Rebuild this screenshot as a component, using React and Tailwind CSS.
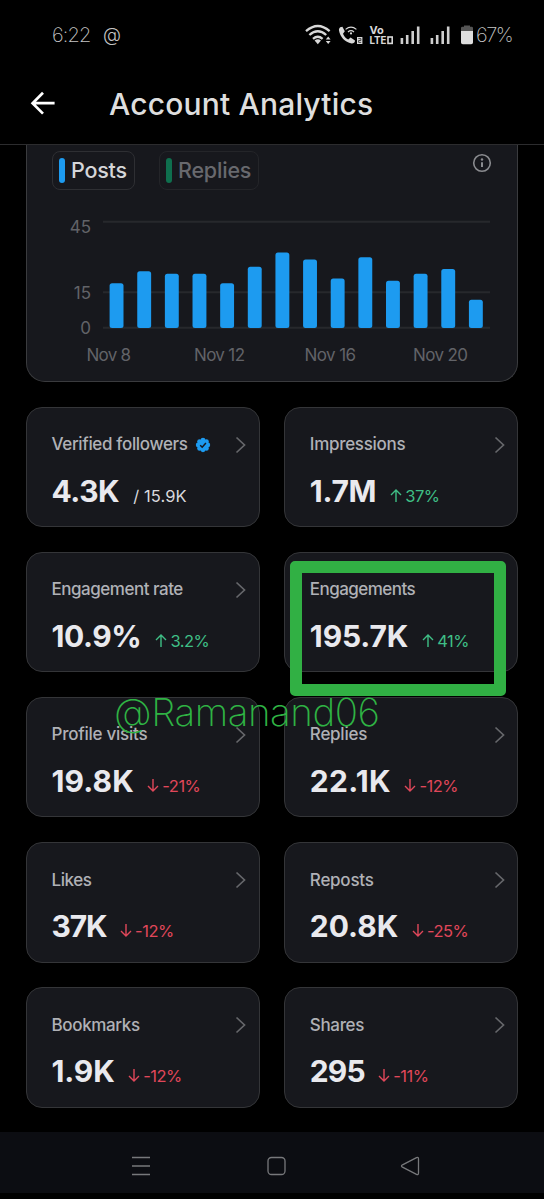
import React from "react";

const cards = [
  { label: "Verified followers", value: "4.3K", total: "/ 15.9K", verified: true, lt: "tracking-[-0.350px]", vt: "tracking-[-0.450px]" },
  { label: "Impressions", value: "1.7M", delta: "37%", up: true, lt: "tracking-[-0.300px]", vt: "tracking-[-0.300px]" },
  { label: "Engagement rate", value: "10.9%", delta: "3.2%", up: true, lt: "tracking-[-0.480px]", vt: "tracking-[-0.400px]" },
  { label: "Engagements", value: "195.7K", delta: "41%", up: true, lt: "tracking-[-0.550px]", vt: "tracking-[-0.150px]" },
  { label: "Profile visits", value: "19.8K", delta: "-21%", lt: "tracking-[-0.250px]", vt: "tracking-[0.100px]" },
  { label: "Replies", value: "22.1K", delta: "-12%", lt: "tracking-[-0.250px]", vt: "tracking-[0.300px]" },
  { label: "Likes", value: "37K", delta: "-12%", lt: "tracking-[-0.450px]", vt: "tracking-[-1.100px]" },
  { label: "Reposts", value: "20.8K", delta: "-25%", lt: "tracking-[-0.250px]", vt: "tracking-[0px]" },
  { label: "Bookmarks", value: "1.9K", delta: "-12%", lt: "tracking-[-0.350px]", vt: "tracking-[-0.100px]" },
  { label: "Shares", value: "295", delta: "-11%", lt: "tracking-[-0.350px]", vt: "tracking-[-0.900px]" },
];

const posts = [19, 24, 23, 23, 19, 26, 32, 29, 21, 30, 20, 23, 25, 12];

function StatusBar() {
  return (
    <div className="flex h-[72px] items-center pl-[52px] pr-[32px] pb-[2px] text-[#c4c4c4]">
      <span className="w-[51px] font-['Inter'] text-[20px] font-extralight tracking-[-0.850px]">6:22</span>
      <span className="pb-px font-['Inter'] text-[18.500px] font-light leading-none">@</span>
      <svg className="ml-auto" width="162" height="30" viewBox="0 0 162 30" fill="none">
        <g stroke="#d8d8d8" strokeWidth="2.3">
          <path d="M1 11.2Q12.8 0.8 24.6 11.2" />
          <path d="M4.4 15Q12.8 7.4 21.2 15" />
          <path d="M8 18.8Q12.8 14.6 17.6 18.8" />
        </g>
        <path d="M9.6 20.6Q12.8 18 16 20.6L12.8 24.2Z" fill="#d8d8d8" />
        <path d="M20.8 19.4L23.2 16.4L25.6 19.4ZM20.8 21L23.2 24L25.6 21Z" fill="#d8d8d8" />
        <path d="M35.2 7.2C34.2 8 33.8 9 34 10.4C35 16.8 40 22.2 46.6 23.4C48 23.6 49.2 23 49.8 21.8L50 20.4L45.6 17.6L43.2 19.6C40.8 18.4 39 16.4 38 13.8L39.8 11.2L37.4 6.8Z" fill="#d8d8d8" />
        <g stroke="#d8d8d8" strokeWidth="1.2">
          <path d="M40.6 9.4Q46 4.8 51.4 9.4" />
          <path d="M43 12Q46 9.4 49 12" />
        </g>
        <circle cx="46" cy="13.4" r="1.1" fill="#d8d8d8" />
        <rect x="52" y="17" width="5.4" height="7" fill="#d8d8d8" />
        <path d="M53.3 18.6H55.9V20.5H53.6V22.4H56.2" stroke="#222" strokeWidth=".8" />
        <text x="64.5" y="14" className="font-['Inter'] text-[11px] font-bold" fill="#d8d8d8">Vo</text>
        <text x="64.5" y="24" textLength="17" lengthAdjust="spacingAndGlyphs" className="font-['Inter'] text-[11px] font-bold" fill="#d8d8d8">LTE</text>
        <rect x="83" y="17" width="4.2" height="6.4" stroke="#d8d8d8" strokeWidth="1.6" />
        <path d="M96.900 24V18M102.200 24V15M107.700 24V11M113.200 24V6.600M126.900 24V18M132.200 24V15M137.700 24V11M143.200 24V6.600" stroke="#cfcfcf" strokeWidth="2.6" />
      </svg>
      <svg className="-ml-[7px]" width="14" height="30" viewBox="0 0 14 30">
        <path d="M4 5.5h6v1.2h1.6q1.4 0 1.4 1.4V11H1V8.100q0-1.400 1.400-1.400H4z" fill="#555" />
        <path d="M1 11H13V22.4q0 1.800-1.800 1.800H2.800Q1 24.200 1 22.400Z" fill="#dedede" />
      </svg>
      <span className="ml-[2px] w-[36px] font-['Inter'] text-[20px] font-extralight tracking-[-1.500px]">67%</span>
    </div>
  );
}

function Header() {
  return (
    <div className="flex h-[73px] items-center border-b border-[#2c2c2e] pl-[30px] pb-[9px]">
      <svg width="25" height="25" viewBox="0 0 25 25" fill="none" stroke="#fff" strokeWidth="2.7">
        <path d="M13 1.800L2.600 12.200L13 22.600M2.600 12.200H24.600" />
      </svg>
      <h1 className="ml-[54px] pt-px font-['Inter'] text-[30px] font-medium leading-none tracking-[0.180px] text-[#dedede]">Account Analytics</h1>
    </div>
  );
}

function ChartCard() {
  return (
    <section className="mx-[26px] h-[237px] rounded-b-[19px] border border-t-0 border-[#3a3b3e] bg-[#17181d] font-['Inter']">
      <div className="flex h-[45px] items-end pl-[25px] pr-[25px]">
        <div className="flex h-[39px] w-[83px] items-center rounded-[8px] border border-[#2e2f33] pl-[6px]">
          <i className="h-[25px] w-[6px] rounded-[3px] bg-[#1d9bf0]" />
          <span className="ml-[6px] text-[21.500px] font-medium leading-none tracking-[-0.200px] text-[#d5d6d9]">Posts</span>
        </div>
        <div className="ml-[24px] flex h-[39px] w-[100px] items-center rounded-[8px] border border-[#242529] pl-[6px]">
          <i className="h-[25px] w-[6px] rounded-[3px] bg-[#0f6f4e]" />
          <span className="ml-[6px] text-[21.500px] font-medium leading-none tracking-[-0.200px] text-[#68696e]">Replies</span>
        </div>
        <svg className="mb-[17px] ml-auto" width="20" height="20" viewBox="0 0 20 20" fill="none" stroke="#8a8b8f">
          <circle cx="10" cy="10" r="8.300" strokeWidth="1.600" />
          <path d="M10 9.200V14" strokeWidth="2" />
          <circle cx="10" cy="6.500" r="1.200" fill="#8a8b8f" stroke="none" />
        </svg>
      </div>
      <svg width="490" height="190" viewBox="27 190 490 190" className="block font-['Inter'] text-[17px]">
        <path d="M103 221.700H490M103 292.300H490M103 327.700H490" stroke="#27282c" strokeWidth="2" />
        {posts.map((v, i) => (
          <rect key={i} x={109.600 + i * 27.640} y={328 - v * 2.360} width="13.900" height={v * 2.360} rx="2.500" fill="#1d9bf0" />
        ))}
        <g fill="#626368">
          <g textAnchor="end">
            <text x="91" y="233">45</text>
            <text x="91" y="299">15</text>
            <text x="91" y="334">0</text>
          </g>
          <text x="86.500" y="361" textLength="44.500">Nov 8</text>
          <text x="194" y="361" textLength="51">Nov 12</text>
          <text x="304.500" y="361" textLength="51.500">Nov 16</text>
          <text x="413" y="361" textLength="55">Nov 20</text>
        </g>
      </svg>
    </section>
  );
}

function Verified() {
  return (
    <svg className="ml-[7px]" width="16" height="16" viewBox="0 0 16 16">
      <g fill="#1d9bf0">
        <circle cx="8" cy="8" r="5.800" />
        <circle cx="8" cy="3.200" r="2.400" />
        <circle cx="11.400" cy="4.600" r="2.400" />
        <circle cx="12.800" cy="8" r="2.400" />
        <circle cx="11.400" cy="11.400" r="2.400" />
        <circle cx="8" cy="12.800" r="2.400" />
        <circle cx="4.600" cy="11.400" r="2.400" />
        <circle cx="3.200" cy="8" r="2.400" />
        <circle cx="4.600" cy="4.600" r="2.400" />
      </g>
      <path d="M5.200 8.200L7.200 10.200L10.900 6" fill="none" stroke="#17181d" strokeWidth="1.500" />
    </svg>
  );
}

function Card({ label, value, total, verified, delta, up, lt, vt }) {
  return (
    <div className="h-[120.500px] rounded-[16px] border-[1.500px] border-[#343538] bg-[#17181d] pl-[24.500px] pr-[12.500px] font-['Inter']">
      <div className="flex h-[26px] items-center mt-[24px]">
        <span className={`${lt} text-[17px] font-medium leading-none text-[#b0b1b6]`}>{label}</span>
        {verified && <Verified />}
        <svg className="ml-auto" width="11" height="18" viewBox="0 0 11 18" fill="none" stroke="#66676b" strokeWidth="1.700">
          <path d="M1.500 1.500L9.500 9L1.500 16.500" />
        </svg>
      </div>
      <div className="mt-[18px] flex items-baseline leading-none">
        <span className={`${vt} text-[30px] font-bold text-[#e9e9ee]`}>{value}</span>
        {total && <span className="ml-[14px] text-[16.500px] tracking-[0.100px] text-[#d9d9de]">{total}</span>}
        {delta && (
          <span className={up ? "ml-[14px] flex items-baseline text-[#3fbf86]" : "ml-[13.500px] flex items-baseline text-[#e0475a]"}>
            <svg width="12" height="13" viewBox="0 0 12 13" fill="none" stroke="currentColor" strokeWidth="1.400">
              <path d={up ? "M6 13V1M1 6L6 1L11 6" : "M6 0V12M1 7L6 12L11 7"} />
            </svg>
            <span className="ml-[3px] text-[16.500px] tracking-[-0.500px]">{delta}</span>
          </span>
        )}
      </div>
    </div>
  );
}

function NavBar() {
  return (
    <nav className="mt-auto mb-[6px] flex h-[61px] items-center bg-[#0c0d12] pl-[131px] pt-[6px]">
      <svg width="290" height="22" viewBox="0 0 290 22" fill="none" stroke="#77787b" strokeWidth="1.300">
        <path d="M1 2.500H19M1 11H19M1 19.500H19" />
        <rect x="137" y="2.500" width="17" height="17" rx="3.500" />
        <path d="M271.500 9.800L285.500 2.600Q287.500 1.800 287.500 4V18Q287.500 20.200 285.500 19.400L271.500 12.200Q269.500 11 271.500 9.800Z" />
      </svg>
    </nav>
  );
}

export default function App() {
  return (
    <main className="relative flex h-[1199px] w-[544px] flex-col overflow-hidden bg-black">
      <StatusBar />
      <Header />
      <ChartCard />
      <div className="mx-[26px] mt-[24.500px] grid grid-cols-2 gap-[24.700px]">
        {cards.map((c) => (
          <Card key={c.label} {...c} />
        ))}
      </div>
      <NavBar />
      <div className="absolute left-[290px] top-[561px] h-[135px] w-[216px] rounded-[5px] border-[12px] border-[#31b044]" />
      <div className="absolute left-[114px] top-[688px] whitespace-nowrap font-['Inter'] text-[38.500px] font-extralight leading-[48px] tracking-[-0.450px] text-[#2fb344]">@Ramanand06</div>
    </main>
  );
}
